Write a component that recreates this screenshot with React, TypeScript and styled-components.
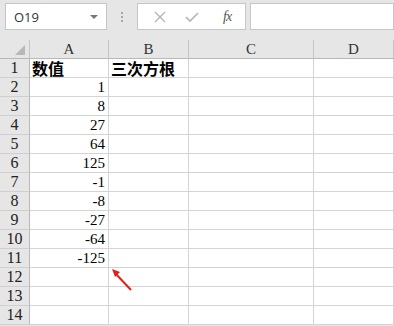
import * as React from "react";
import styled, { createGlobalStyle } from "styled-components";

const GlobalStyle = createGlobalStyle`
  html, body {
    margin: 0;
    padding: 0;
    background: #ffffff;
  }
  body {
    width: 394px;
    height: 326px;
    overflow: hidden;
  }
`;

const Page = styled.div`
  position: relative;
  width: 394px;
  height: 326px;
  background: #e6e6e6;
  overflow: hidden;
`;

const Toolbar = styled.div`
  display: flex;
  align-items: center;
  height: 40px;
  padding: 0 0 7px 5px;
  box-sizing: border-box;
`;

const Box = styled.div<{ $w?: number; $grow?: boolean }>`
  height: 27px;
  box-sizing: border-box;
  background: #ffffff;
  border: 1px solid #c6c6c6;
  display: flex;
  align-items: center;
  ${(p) => (p.$w ? `width: ${p.$w}px;` : "")}
  ${(p) => (p.$grow ? "flex: 1;" : "")}
`;

const NameBox = styled(Box)`
  padding: 0 6px 0 8px;
  justify-content: space-between;
  font-family: "Open Sans", "Liberation Sans", sans-serif;
  font-size: 13px;
  color: #333;
`;

const Caret = styled.span`
  width: 0;
  height: 0;
  border-left: 4px solid transparent;
  border-right: 4px solid transparent;
  border-top: 4px solid #777;
  margin-right: 2px;
`;

const Dots = styled.div`
  width: 30px;
  display: flex;
  flex-direction: column;
  align-items: center;
  gap: 2px;
  & > span {
    width: 2px;
    height: 2px;
    background: #a8a8a8;
  }
`;

const FxBox = styled(Box)`
  justify-content: space-around;
  padding: 0 4px 0 6px;
  margin-right: 4px;
`;

const FxLabel = styled.span`
  font-family: "Liberation Serif", serif;
  font-style: italic;
  font-size: 14px;
  color: #555;
  letter-spacing: -1px;
  margin-left: 4px;
`;

const Sheet = styled.div`
  display: grid;
  grid-template-columns: 30px 79px 80px 125px 1fr;
  grid-auto-rows: 19px;
  background: #ffffff;
`;

const HeadCell = styled.div`
  background: #e6e6e6;
  border-right: 1px solid #c4c4c4;
  border-bottom: 1px solid #b8b8b8;
  box-sizing: border-box;
  display: flex;
  align-items: center;
  justify-content: center;
  font-family: "Liberation Serif", serif;
  font-size: 15px;
  color: #333;
  position: relative;
`;

const CornerMark = styled.span`
  position: absolute;
  right: 4px;
  bottom: 3px;
  width: 0;
  height: 0;
  border-left: 10px solid transparent;
  border-bottom: 10px solid #b8b8b8;
`;

const RowHead = styled.div`
  background: #e6e6e6;
  border-right: 1px solid #b8b8b8;
  border-bottom: 1px solid #cfcfcf;
  box-sizing: border-box;
  display: flex;
  align-items: center;
  justify-content: center;
  font-family: "Liberation Serif", serif;
  font-size: 16px;
  color: #222;
`;

const Cell = styled.div<{ $num?: boolean; $bold?: boolean }>`
  border-right: 1px solid #d4d4d4;
  border-bottom: 1px solid #d4d4d4;
  box-sizing: border-box;
  display: flex;
  align-items: center;
  justify-content: ${(p) => (p.$num ? "flex-end" : "flex-start")};
  padding: 0 3px 0 2px;
  font-family: ${(p) =>
    p.$bold ? `"Noto Sans CJK SC", sans-serif` : `"Liberation Serif", serif`};
  font-weight: ${(p) => (p.$bold ? 700 : 400)};
  font-size: ${(p) => (p.$bold ? "16px" : "15px")};
  color: #000;
  white-space: nowrap;
`;

const Arrow = styled.svg`
  position: absolute;
  left: 108px;
  top: 264px;
`;

const values = ["1", "8", "27", "64", "125", "-1", "-8", "-27", "-64", "-125", "", "", ""];

export default function App(): React.ReactElement {
  return (
    <Page>
      <GlobalStyle />
      <Toolbar>
        <NameBox $w={102}>
          <span>O19</span>
          <Caret />
        </NameBox>
        <Dots>
          <span />
          <span />
          <span />
        </Dots>
        <FxBox $w={109}>
          <svg width="12" height="12" viewBox="0 0 12 12">
            <path d="M1 1 L11 11 M11 1 L1 11" stroke="#b4b4b4" strokeWidth="1.4" fill="none" />
          </svg>
          <svg width="14" height="12" viewBox="0 0 14 12">
            <path d="M1 6 L5 10 L13 2" stroke="#b4b4b4" strokeWidth="1.6" fill="none" />
          </svg>
          <FxLabel>fx</FxLabel>
        </FxBox>
        <Box $grow />
      </Toolbar>
      <Sheet>
        <HeadCell>
          <CornerMark />
        </HeadCell>
        <HeadCell>A</HeadCell>
        <HeadCell>B</HeadCell>
        <HeadCell>C</HeadCell>
        <HeadCell>D</HeadCell>

        <RowHead>1</RowHead>
        <Cell $bold>数值</Cell>
        <Cell $bold>三次方根</Cell>
        <Cell />
        <Cell />

        {values.map((v, i) => (
          <React.Fragment key={i}>
            <RowHead>{i + 2}</RowHead>
            <Cell $num>{v}</Cell>
            <Cell />
            <Cell />
            <Cell />
          </React.Fragment>
        ))}
      </Sheet>
      <Arrow width="30" height="30" viewBox="0 0 30 30">
        <path d="M23 26 L7 9" stroke="#e0201c" strokeWidth="2" fill="none" />
        <path d="M4 5 L12 8 L7 13 Z" fill="#e0201c" />
      </Arrow>
    </Page>
  );
}
